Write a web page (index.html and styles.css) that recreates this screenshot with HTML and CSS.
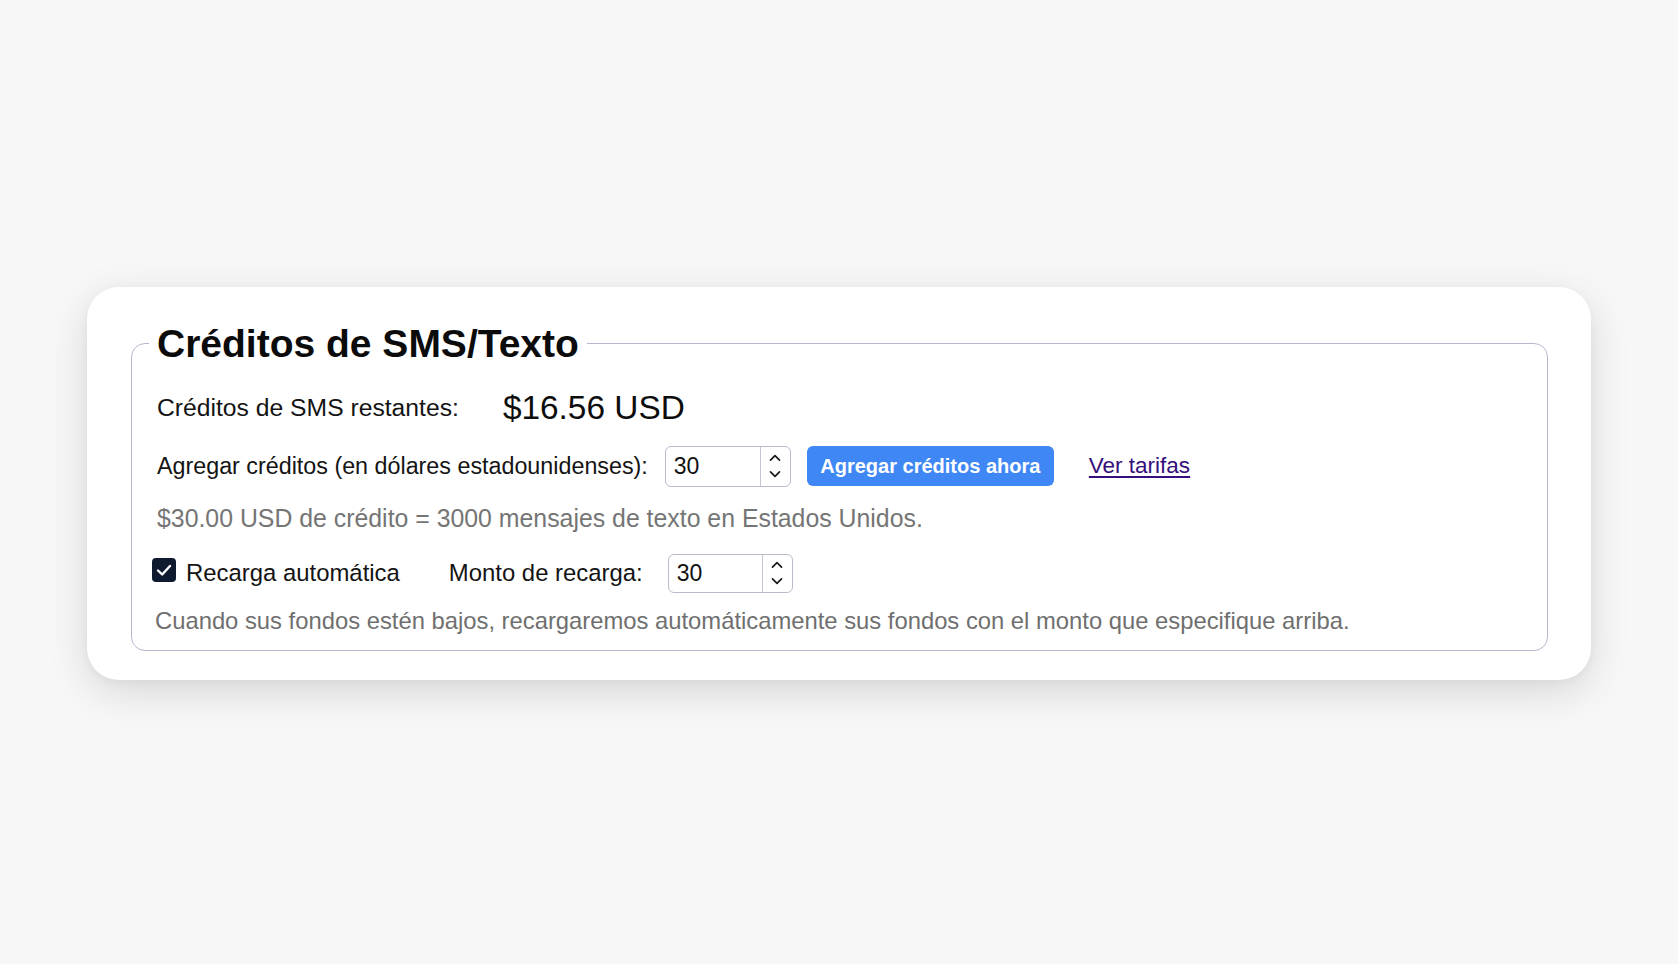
FILE: index.html
```html
<!DOCTYPE html>
<html lang="es">
<head>
<meta charset="utf-8">
<title>Créditos de SMS/Texto</title>
<link rel="stylesheet" href="styles.css">
</head>
<body>
<div class="card">
  <fieldset class="box">
    <legend class="title">Créditos de SMS/Texto</legend>
    <div class="row row1">
      <span class="label">Créditos de SMS restantes:</span>
      <span class="amount">$16.56 USD</span>
    </div>
    <div class="row row2">
      <span class="label label-add">Agregar créditos (en dólares estadounidenses):</span>
      <div class="num num-a">
        <input class="num-field" type="text" value="30">
        <span class="spin">
          <svg viewBox="0 0 14 10" class="chev"><path d="M2 8 L7 3 L12 8"/></svg>
          <svg viewBox="0 0 14 10" class="chev"><path d="M2 2 L7 7 L12 2"/></svg>
        </span>
      </div>
      <button class="btn" type="button">Agregar créditos ahora</button>
      <a class="link" href="#">Ver tarifas</a>
    </div>
    <p class="note note1">$30.00 USD de crédito = 3000 mensajes de texto en Estados Unidos.</p>
    <div class="row row4">
      <span class="check">
        <svg viewBox="0 0 24 24"><path d="M6 12.5 L10.2 16.5 L18 8"/></svg>
      </span>
      <span class="label label-sm">Recarga automática</span>
      <span class="label label-sm monto">Monto de recarga:</span>
      <div class="num num-b">
        <input class="num-field" type="text" value="30">
        <span class="spin">
          <svg viewBox="0 0 14 10" class="chev"><path d="M2 8 L7 3 L12 8"/></svg>
          <svg viewBox="0 0 14 10" class="chev"><path d="M2 2 L7 7 L12 2"/></svg>
        </span>
      </div>
    </div>
    <p class="note note2">Cuando sus fondos estén bajos, recargaremos automáticamente sus fondos con el monto que especifique arriba.</p>
  </fieldset>
</div>
</body>
</html>
```

FILE: styles.css
```css
html, body {
  margin: 0;
  padding: 0;
}
body {
  background: #f7f7f7;
  width: 1678px;
  height: 964px;
  box-sizing: border-box;
  padding-top: 2px;
  display: flex;
  align-items: center;
  justify-content: center;
  font-family: "Liberation Sans", Arial, sans-serif;
  color: #111;
}
.card {
  width: 1504px;
  box-sizing: border-box;
  background: #fff;
  border-radius: 32px;
  padding: 34px 43px 29px 44px;
  box-shadow: 0 12px 40px rgba(0, 0, 0, 0.13), 0 2px 8px rgba(0, 0, 0, 0.04);
}
.box {
  margin: 0;
  border: 1.5px solid #b7b8cf;
  border-radius: 14px;
  padding: 21px 25px 16px 25px;
}
.title {
  font-size: 39px;
  font-weight: bold;
  line-height: 46px;
  padding: 0 8px;
  margin-left: -8px;
  color: #0b0b0b;
}
.row {
  display: flex;
  align-items: center;
}
.label {
  font-size: 24.7px;
  line-height: 28px;
  color: #141414;
}
.label-add {
  font-size: 23.3px;
}
.label-sm {
  font-size: 23.9px;
}
.row1 {
  height: 40px;
}
.amount {
  font-size: 33.4px;
  line-height: 40px;
  margin-left: 44px;
  color: #0d0d0d;
}
.row2 {
  height: 41px;
  margin-top: 18px;
}
.num {
  display: flex;
  box-sizing: border-box;
  border: 1.5px solid #b9bacb;
  border-radius: 6px;
  background: #fff;
}
.num-a {
  width: 126px;
  height: 41px;
  margin-left: 17px;
}
.num-b {
  width: 125px;
  height: 39px;
  margin-left: 25px;
}
.num-field {
  flex: 1;
  min-width: 0;
  border: 0;
  outline: none;
  background: transparent;
  font-family: "Liberation Sans", Arial, sans-serif;
  font-size: 23px;
  color: #111;
  padding: 0 0 0 8px;
}
.spin {
  width: 29px;
  border-left: 1.5px solid #c4c5d2;
  display: flex;
  flex-direction: column;
  align-items: center;
  justify-content: center;
  gap: 8px;
}
.chev {
  width: 14px;
  height: 9px;
  fill: none;
  stroke: #1a1a1a;
  stroke-width: 1.9;
  stroke-linecap: round;
  stroke-linejoin: round;
}
.btn {
  margin-left: 16px;
  width: 247px;
  height: 40px;
  border: 0;
  border-radius: 6px;
  background: #3f87f5;
  color: #fff;
  font-family: "Liberation Sans", Arial, sans-serif;
  font-size: 20px;
  font-weight: bold;
  padding: 0;
}
.link {
  margin-left: 35px;
  font-size: 22.5px;
  color: #35107c;
  text-decoration: underline;
  text-underline-offset: 3px;
}
.note {
  margin: 0;
  color: #757575;
}
.note1 {
  margin-top: 18px;
  font-size: 24.85px;
  line-height: 28px;
}
.row4 {
  height: 39px;
  margin-top: 21px;
  margin-left: -5px;
}
.check {
  width: 24px;
  height: 24px;
  border-radius: 4px;
  background: #0f1930;
  display: flex;
  margin-top: -6px;
  margin-right: 10px;
}
.check svg {
  width: 24px;
  height: 24px;
  fill: none;
  stroke: #fff;
  stroke-width: 2.4;
  stroke-linecap: round;
  stroke-linejoin: round;
}
.monto {
  margin-left: 49px;
}
.note2 {
  margin-top: 14px;
  margin-left: -2px;
  font-size: 23.8px;
  line-height: 27px;
  color: #6f6f6f;
}
```
